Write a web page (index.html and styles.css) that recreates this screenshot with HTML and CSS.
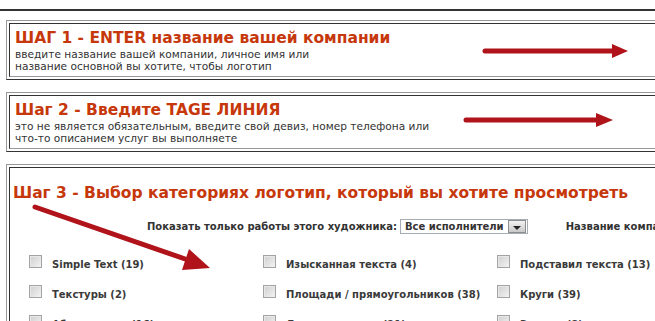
FILE: index.html
```html
<!DOCTYPE html>
<html lang="ru">
<head>
    <meta charset="UTF-8">
    <title>Конструктор логотипов</title>
    <link rel="stylesheet" href="styles.css">
</head>
<body>
    <div class="top-rule"></div>

    <div class="step">
        <div class="step-cell">
            <div class="step-text">
                <h2 class="step-title">ШАГ 1 - ENTER название вашей компании</h2>
                <p class="step-note">введите название вашей компании, личное имя или<br>название основной вы хотите, чтобы логотип</p>
            </div>
            <svg class="step-arrow step-arrow-1" width="150" height="16" viewBox="0 0 150 16">
                <line x1="3" y1="8" x2="134" y2="8" stroke="#b01319" stroke-width="5" stroke-linecap="round"/>
                <polygon points="130,1 146,8 130,15" fill="#b01319"/>
            </svg>
        </div>
    </div>

    <div class="step">
        <div class="step-cell">
            <div class="step-text">
                <h2 class="step-title">Шаг 2 - Введите TAGE ЛИНИЯ</h2>
                <p class="step-note">это не является обязательным, введите свой девиз, номер телефона или<br>что-то описанием услуг вы выполняете</p>
            </div>
            <svg class="step-arrow step-arrow-2" width="152" height="16" viewBox="0 0 152 16">
                <line x1="3" y1="8" x2="136" y2="8" stroke="#b01319" stroke-width="5" stroke-linecap="round"/>
                <polygon points="133,1 150,8 133,15" fill="#b01319"/>
            </svg>
        </div>
    </div>

    <div class="step">
        <div class="step-cell step-cell-wide">
            <h2 class="step-title">Шаг 3 - Выбор категориях логотип, который вы хотите просмотреть</h2>

            <div class="filter-row">
                <span class="filter-label">Показать только работы этого художника:</span>
                <span class="fake-select">Все исполнители<span class="fake-select-btn"><span class="caret"></span></span></span>
                <span class="filter-label filter-company">Название компании:</span>
            </div>

            <ul class="category-grid">
                <li class="category"><span class="checkbox"></span><span class="category-name">Simple Text (19)</span></li>
                <li class="category"><span class="checkbox"></span><span class="category-name">Изысканная текста (4)</span></li>
                <li class="category"><span class="checkbox"></span><span class="category-name">Подставил текста (13)</span></li>
                <li class="category"><span class="checkbox"></span><span class="category-name">Текстуры (2)</span></li>
                <li class="category"><span class="checkbox"></span><span class="category-name">Площади / прямоугольников (38)</span></li>
                <li class="category"><span class="checkbox"></span><span class="category-name">Круги (39)</span></li>
                <li class="category"><span class="checkbox"></span><span class="category-name">Абстрактные (16)</span></li>
                <li class="category"><span class="checkbox"></span><span class="category-name">Линии и кривые (21)</span></li>
                <li class="category"><span class="checkbox"></span><span class="category-name">Звезды (8)</span></li>
            </ul>

            <!-- pointer arrow drawn over the grid -->
            <svg class="diag-arrow" width="200" height="80" viewBox="0 0 200 80">
                <line x1="5" y1="4" x2="158" y2="57" stroke="#b01319" stroke-width="5" stroke-linecap="round"/>
                <polygon points="152,67 180,65 159,46" fill="#b01319"/>
            </svg>
        </div>
    </div>
</body>
</html>
```

FILE: styles.css
```css
body {
    margin: 0;
    overflow: hidden;
    background: #fff;
    color: #333;
    font-family: "DejaVu Sans", Verdana, sans-serif;
}

.top-rule {
    margin-top: 9px;
    border-top: 2px solid #333;
}

/* table border=1 look: outset outer, inset cell */
.step {
    width: 720px;
    margin: 9px 0 0 6px;
    padding: 2px;
    border: 1px solid;
    border-color: #999 #333 #333 #999;
}

.step + .step {
    margin-top: 12px;
}

.step-cell {
    display: flex;
    align-items: center;
    padding: 5px 5px 4px;
    border: 1px solid;
    border-color: #333 #999 #999 #333;
}

.step-cell-wide {
    display: block;
    position: relative;
    padding: 16px 5px 0 3px;
    height: 200px;
}

.step-text {
    width: 440px;
    flex: none;
}

.step-title {
    margin: 0;
    font-size: 15.5px;
    line-height: 19px;
    font-weight: bold;
    color: #c6380b;
    white-space: nowrap;
}

.step-note {
    margin: 0;
    font-size: 10.6px;
    line-height: 12px;
    color: #333;
    white-space: nowrap;
}

.step-arrow-1 {
    margin-left: 27px;
}

.step-arrow-2 {
    margin-left: 8px;
    margin-bottom: 6px;
}

.filter-row {
    display: flex;
    align-items: center;
    margin: 16px 0 0 134px;
    font-size: 10px;
    line-height: 14px;
    font-weight: bold;
    white-space: nowrap;
}

.fake-select {
    display: inline-flex;
    align-items: center;
    gap: 4px;
    height: 13px;
    margin-left: 3px;
    padding: 0 1px 0 4px;
    border: 1px solid #a5acb2;
    color: #333;
}

.fake-select-btn {
    display: flex;
    align-items: center;
    justify-content: center;
    width: 16px;
    height: 11px;
    border: 1px solid #8e8e8e;
    background: linear-gradient(#f2f2f2, #c9c9c9);
}

.caret {
    width: 0;
    height: 0;
    margin-top: 3px;
    border-left: 4px solid transparent;
    border-right: 4px solid transparent;
    border-top: 4px solid #222;
}

.filter-company {
    margin-left: 38px;
}

.category-grid {
    list-style: none;
    display: grid;
    grid-template-columns: repeat(3, 234px);
    grid-auto-rows: 30px;
    margin: 21px 0 0 16px;
    padding: 0;
}

.category {
    display: flex;
    align-items: flex-start;
    gap: 10px;
}

.checkbox {
    width: 11px;
    height: 11px;
    flex: none;
    border: 1px solid #a3a3a3;
    background: linear-gradient(135deg, #cfcfcf, #f3f3f3);
    box-shadow: inset 1px 1px 0 #e8e8e8;
}

.category-name {
    padding-top: 3px;
    font-size: 10px;
    line-height: 14px;
    font-weight: bold;
    color: #3a3a3a;
    white-space: nowrap;
}

.diag-arrow {
    position: absolute;
    left: 20px;
    top: 35px;
}
```
